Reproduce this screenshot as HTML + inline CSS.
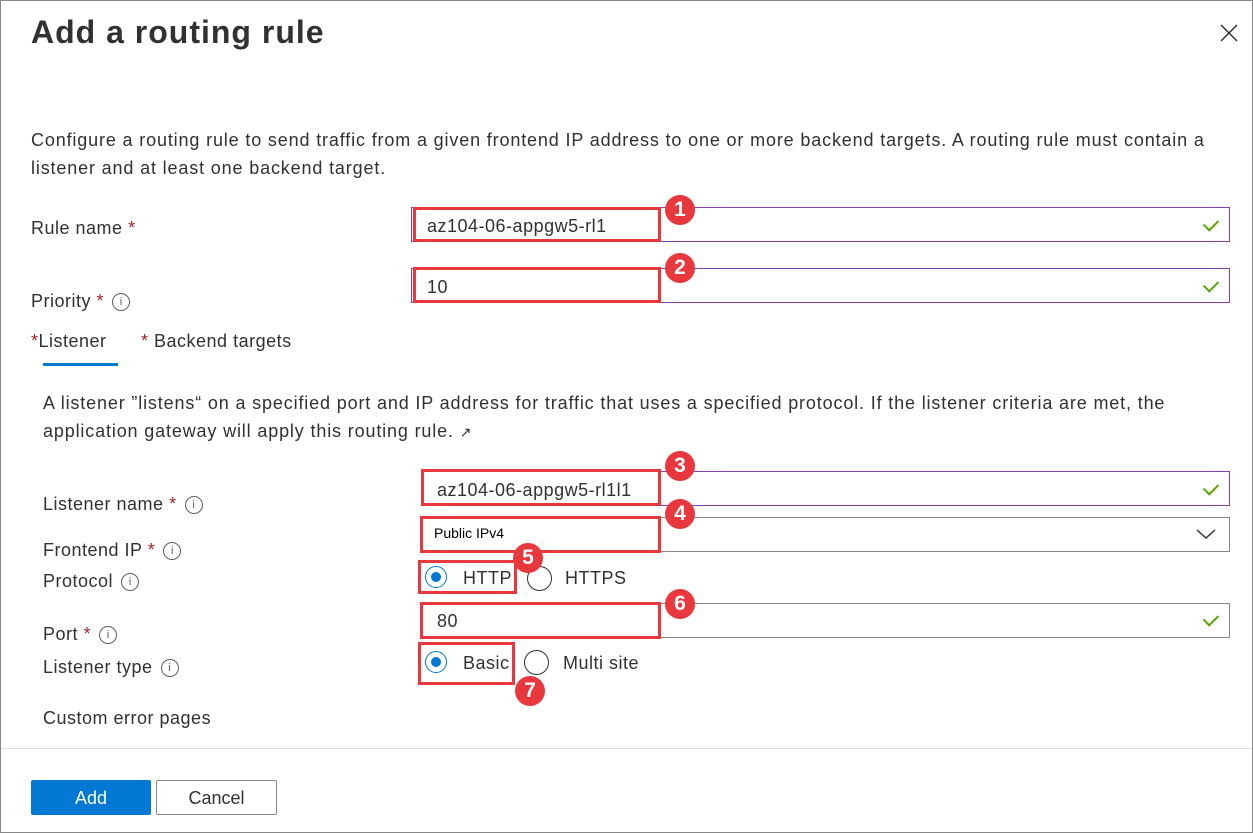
<!DOCTYPE html>
<html><head><meta charset="utf-8"><style>
body{margin:0;width:1253px;height:833px;background:#fff;font-family:"Segoe UI","Liberation Sans",sans-serif;color:#323130;position:relative;overflow:hidden}
.a{position:absolute;white-space:nowrap}
.frame{position:absolute;left:0;top:0;width:1251px;height:831px;border:1px solid #8a8886}
.inp{position:absolute;height:33px;border:1px solid #8a8886;box-sizing:border-box;background:#fff}
.pur{border-color:#8a3fb0}
.red{position:absolute;border:3px solid #e8383d;box-sizing:border-box}
.num{position:absolute;width:30px;height:30px;border-radius:50%;background:#e8383d;color:#fff;font:bold 21px "Liberation Sans",sans-serif;text-align:center;line-height:30px}
.lbl{font-size:18px;color:#323130;letter-spacing:0.5px}
.star{color:#a4262c}
.info{display:inline-block;width:16px;height:16px;border:1px solid #605e5c;border-radius:50%;font-size:11px;line-height:16px;text-align:center;vertical-align:middle;margin-left:8px;color:#605e5c;letter-spacing:0}
.chk{position:absolute;width:12px;height:7px;border-left:2px solid #57a300;border-bottom:2px solid #57a300;transform:rotate(-45deg)}
.rad{position:absolute;width:22px;height:22px;border:1px solid #323130;border-radius:50%;box-sizing:border-box}
.rad.on{border-color:#0078d4}
.rad.on::after{content:"";position:absolute;left:5px;top:5px;width:10px;height:10px;border-radius:50%;background:#0078d4}
</style></head><body>
<div class="frame"></div>
<div class="a" style="left:31px;top:14px;font-size:32px;font-weight:bold;letter-spacing:1px;color:#323130">Add a routing rule</div>
<svg class="a" style="left:1219px;top:23px" width="20" height="20"><path d="M2 2L18 18M18 2L2 18" stroke="#323130" stroke-width="1.5"/></svg>
<div class="a lbl" style="left:31px;top:126px;line-height:28px;white-space:normal;width:1200px;letter-spacing:0.85px">Configure a routing rule to send traffic from a given frontend IP address to one or more backend targets. A routing rule must contain a listener and at least one backend target.</div>

<div class="a lbl" style="left:31px;top:218px">Rule name <span class="star">*</span></div>
<div class="inp pur" style="left:411px;top:207px;width:819px;height:35px"></div>
<div class="a lbl" style="left:427px;top:216px">az104-06-appgw5-rl1</div>
<div class="chk" style="left:1204px;top:219px"></div>

<div class="a lbl" style="left:31px;top:291px">Priority <span class="star">*</span><span class="info">i</span></div>
<div class="inp pur" style="left:411px;top:268px;width:819px;height:35px"></div>
<div class="a lbl" style="left:427px;top:277px">10</div>
<div class="chk" style="left:1204px;top:280px"></div>

<div class="a lbl" style="left:31px;top:331px"><span class="star">*</span>Listener</div>
<div class="a" style="left:43px;top:363px;width:75px;height:3px;background:#0078d4"></div>
<div class="a lbl" style="left:141px;top:331px"><span class="star">*</span> Backend targets</div>

<div class="a lbl" style="left:43px;top:389px;line-height:28px;white-space:normal;width:1180px;letter-spacing:0.85px">A listener ”listens“ on a specified port and IP address for traffic that uses a specified protocol. If the listener criteria are met, the application gateway will apply this routing rule. <span style="font-size:14px">&#x2197;</span></div>

<div class="a lbl" style="left:43px;top:494px">Listener name <span class="star">*</span><span class="info">i</span></div>
<div class="inp pur" style="left:422px;top:471px;width:808px;height:35px"></div>
<div class="a lbl" style="left:437px;top:480px">az104-06-appgw5-rl1l1</div>
<div class="chk" style="left:1204px;top:483px"></div>

<div class="a lbl" style="left:43px;top:540px">Frontend IP <span class="star">*</span><span class="info">i</span></div>
<div class="inp" style="left:422px;top:517px;width:808px;height:35px"></div>
<div class="a" style="left:434px;top:525px;font-size:14px;color:#000">Public IPv4</div>
<svg class="a" style="left:1196px;top:528px" width="20" height="12"><path d="M1 2L10 10L19 2" stroke="#323130" stroke-width="1.5" fill="none"/></svg>

<div class="a lbl" style="left:43px;top:571px">Protocol<span class="info">i</span></div>
<div class="rad on" style="left:425px;top:566px"></div>
<div class="a lbl" style="left:463px;top:568px">HTTP</div>
<div class="rad" style="left:527px;top:566px;width:25px;height:25px"></div>
<div class="a lbl" style="left:565px;top:568px">HTTPS</div>

<div class="a lbl" style="left:43px;top:624px">Port <span class="star">*</span><span class="info">i</span></div>
<div class="inp" style="left:422px;top:603px;width:808px;height:35px"></div>
<div class="a lbl" style="left:437px;top:611px">80</div>
<div class="chk" style="left:1204px;top:614px"></div>

<div class="a lbl" style="left:43px;top:657px">Listener type<span class="info">i</span></div>
<div class="rad on" style="left:425px;top:651px"></div>
<div class="a lbl" style="left:463px;top:653px">Basic</div>
<div class="rad" style="left:524px;top:650px;width:25px;height:25px"></div>
<div class="a lbl" style="left:563px;top:653px">Multi site</div>

<div class="a lbl" style="left:43px;top:708px">Custom error pages</div>
<div class="a" style="left:1px;top:748px;width:1251px;height:1px;background:#e1dfdd"></div>
<div class="a" style="left:31px;top:780px;width:120px;height:35px;background:#0078d4;color:#fff;font-size:18px;text-align:center;line-height:37px;border-radius:2px">Add</div>
<div class="a" style="left:156px;top:780px;width:121px;height:35px;border:1px solid #8a8886;box-sizing:border-box;font-size:18px;text-align:center;line-height:35px;border-radius:2px">Cancel</div>

<div class="red" style="left:413px;top:207px;width:248px;height:35px"></div>
<div class="red" style="left:413px;top:267px;width:248px;height:36px"></div>
<div class="red" style="left:421px;top:469px;width:240px;height:37px"></div>
<div class="red" style="left:420px;top:516px;width:241px;height:37px"></div>
<div class="red" style="left:418px;top:560px;width:99px;height:34px"></div>
<div class="red" style="left:420px;top:602px;width:241px;height:37px"></div>
<div class="red" style="left:418px;top:642px;width:97px;height:43px"></div>
<div class="num" style="left:665px;top:195px">1</div>
<div class="num" style="left:665px;top:253px">2</div>
<div class="num" style="left:665px;top:451px">3</div>
<div class="num" style="left:665px;top:499px">4</div>
<div class="num" style="left:513px;top:543px">5</div>
<div class="num" style="left:665px;top:589px">6</div>
<div class="num" style="left:515px;top:676px">7</div>
</body></html>
